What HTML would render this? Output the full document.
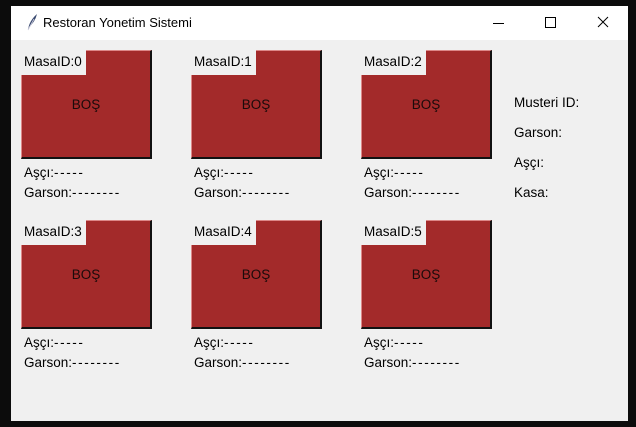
<!DOCTYPE html>
<html><head><meta charset="utf-8"><style>
body{margin:0;width:636px;height:427px;background:#0c0c0c;position:relative;overflow:hidden;font-family:"Liberation Sans","DejaVu Sans",sans-serif;font-size:13.5px;color:#000}
.win{position:absolute;left:11px;top:6px;width:617px;height:415px;background:#f0f0f0}
.title{position:absolute;left:0;top:0;width:617px;height:34px;background:#fff}
.t{position:absolute;white-space:nowrap}
.d{letter-spacing:1.6px}
.box{position:absolute;background:#a32a2a;border-top:1px solid #d88;border-left:1px solid #d88;border-right:2px solid #111;border-bottom:2px solid #111;box-sizing:border-box;width:131px;height:109px}
.lbl{position:absolute;left:-1px;top:-1px;width:65px;height:25px;background:#f0f0f0;padding:4px 0 0 3px;box-sizing:border-box}
.bos{position:absolute;left:0;right:0;top:46px;text-align:center;color:#1a0a0a}
</style></head><body>
<div class="win">
<div class="title">
<svg style="position:absolute;left:14px;top:7px" width="14" height="18" viewBox="0 0 14 18"><path d="M3 17 Q4 8 12 1 Q10 9 4 14 Z" fill="#3a4a70"/><path d="M3 17 L9 6" stroke="#ccd" stroke-width="0.8"/></svg>
<span class="t" style="left:32px;top:9px;font-size:13px">Restoran Yonetim Sistemi</span>
<div style="position:absolute;left:482px;top:17px;width:11px;height:1px;background:#000"></div>
<div style="position:absolute;left:534px;top:11px;width:9px;height:9px;border:1px solid #000"></div>
<svg style="position:absolute;left:586px;top:10px" width="12" height="12"><path d="M1 1L11 11M11 1L1 11" stroke="#000" stroke-width="1"/></svg>
</div>
</div>
<div class="box" style="left:21px;top:50px"><div class="lbl">MasaID:0</div><div class="bos">BOŞ</div></div>
<div class="box" style="left:191px;top:50px"><div class="lbl">MasaID:1</div><div class="bos">BOŞ</div></div>
<div class="box" style="left:361px;top:50px"><div class="lbl">MasaID:2</div><div class="bos">BOŞ</div></div>
<div class="box" style="left:21px;top:220px"><div class="lbl">MasaID:3</div><div class="bos">BOŞ</div></div>
<div class="box" style="left:191px;top:220px"><div class="lbl">MasaID:4</div><div class="bos">BOŞ</div></div>
<div class="box" style="left:361px;top:220px"><div class="lbl">MasaID:5</div><div class="bos">BOŞ</div></div>
<span class="t" style="left:24px;top:165px">Aşçı:<span class="d">-----</span></span><span class="t" style="left:24px;top:185px">Garson:<span class="d">--------</span></span>
<span class="t" style="left:194px;top:165px">Aşçı:<span class="d">-----</span></span><span class="t" style="left:194px;top:185px">Garson:<span class="d">--------</span></span>
<span class="t" style="left:364px;top:165px">Aşçı:<span class="d">-----</span></span><span class="t" style="left:364px;top:185px">Garson:<span class="d">--------</span></span>
<span class="t" style="left:24px;top:335px">Aşçı:<span class="d">-----</span></span><span class="t" style="left:24px;top:355px">Garson:<span class="d">--------</span></span>
<span class="t" style="left:194px;top:335px">Aşçı:<span class="d">-----</span></span><span class="t" style="left:194px;top:355px">Garson:<span class="d">--------</span></span>
<span class="t" style="left:364px;top:335px">Aşçı:<span class="d">-----</span></span><span class="t" style="left:364px;top:355px">Garson:<span class="d">--------</span></span>
<span class="t" style="left:514px;top:95px">Musteri ID:</span>
<span class="t" style="left:514px;top:125px">Garson:</span>
<span class="t" style="left:514px;top:155px">Aşçı:</span>
<span class="t" style="left:514px;top:185px">Kasa:</span>
</body></html>
